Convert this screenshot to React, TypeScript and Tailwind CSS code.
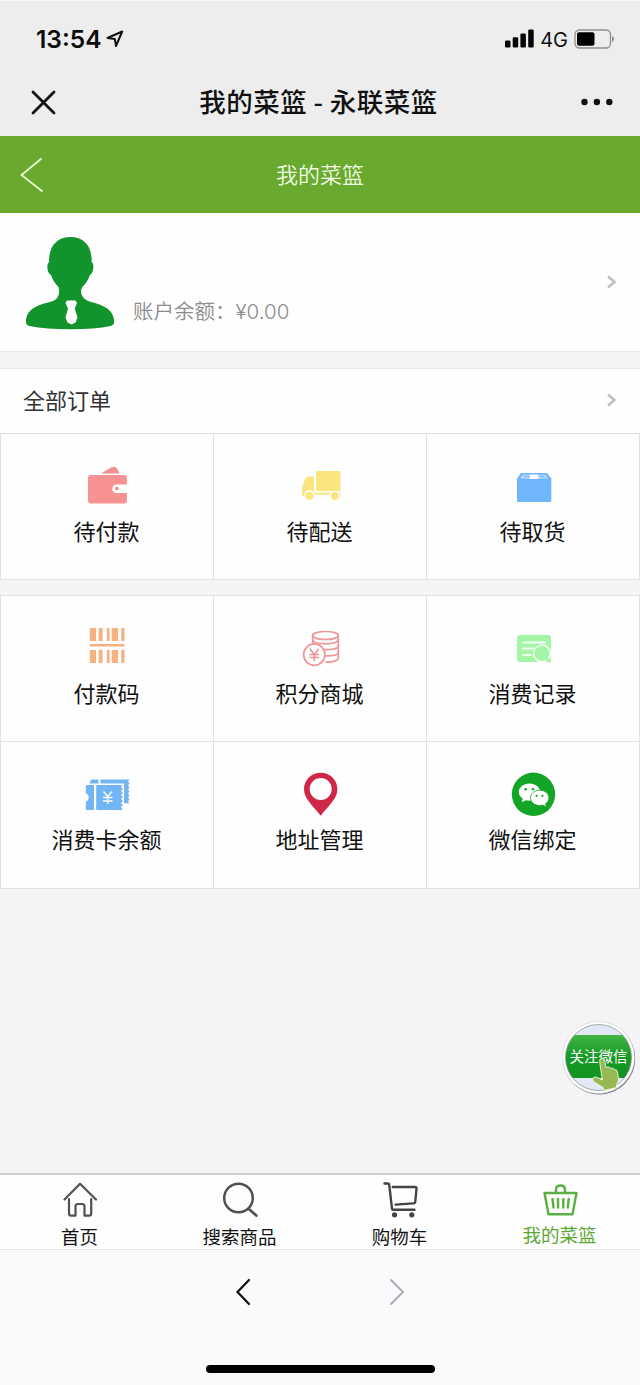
import React from 'react';

type IconProps = { children: React.ReactNode };

const MenuIcon: React.FC<IconProps> = ({ children }) => (
  <svg viewBox="0 0 48 48" className="w-12 h-12 -ml-px" fill="none">
    {children}
  </svg>
);

const WalletIcon = () => (
  <MenuIcon>
    <path d="M18 11.5 28.5 5.2q3.5-1.6 5.4 1.3L36.8 11.5Z" fill="#f58e8e" />
    <path
      d="M8 13H41q3 0 3 3V22.5H33.5a4.2 4.2 0 0 0 0 8.5H44V38.5q0 3-3 3H8q-3 0-3-3V16q0-3 3-3Z"
      fill="#f79292"
    />
    <circle cx="33.8" cy="26.6" r="1.8" fill="#f08a8a" />
  </MenuIcon>
);

const TruckIcon = () => (
  <MenuIcon>
    <g fill="#fbe57c">
      <path d="M20.5 9H43.5a1 1 0 0 1 1 1V29H20V10Z" />
      <path d="M18 14.5H13q-2.5 0-3.6 2.2L6.7 23.5q-.7 1.5-.7 3.2V33.5H8.4a4.8 4.8 0 0 1 9.6-1.5Z" />
      <path d="M19 30.5H34.5q-1 1-1.2 2.2H18.7q0-1.200.3-2.2ZM43 30.5H44.500V33H43.8q-.2-1.5-.8-2.500Z" />
      <circle cx="13.3" cy="34" r="4" />
      <circle cx="38.8" cy="34" r="4" />
    </g>
  </MenuIcon>
);

const BoxIcon = () => (
  <MenuIcon>
    <path d="M12 11H38l4.300 5.500V38.5q0 1.500-1.500 1.500H9.500Q8 40 8 38.5V16.500Z" fill="#70b6fb" />
    <path d="M14 12.800H36.500L39 16.500H11Z" fill="#b5d9ff" />
    <path d="M21.500 12.500H28.500L30 17H20.500Z" fill="#fff" />
    <path d="M15 14.500H20M30.500 14.500H35.500" stroke="#70b6fb" strokeWidth="1.2" />
  </MenuIcon>
);

const BarcodeIcon = () => (
  <MenuIcon>
    <path
      d="M6.8 4H13V17H6.8ZM15.7 4H19.6V17H15.7ZM23.8 4H26.6V17H23.8ZM28.7 4H35V17H28.7ZM38.2 4H41.5V17H38.2ZM6.8 26H13V39H6.8ZM15.7 26H19.6V39H15.7ZM23.8 26H26.6V39H23.8ZM28.7 26H35V39H28.7ZM38.2 26H41.5V39H38.2ZM6.8 20H41.5V22.5H6.8Z"
      fill="#f6b183"
    />
  </MenuIcon>
);

const CoinsIcon = () => (
  <MenuIcon>
    <g stroke="#ee9797" strokeWidth="1.7" strokeLinecap="round">
      <ellipse cx="29.5" cy="11.5" rx="12.8" ry="4" />
      <path d="M16.7 11.5V19M42.3 11.5V34c0 2.5-5 4.2-12.3 4.2" />
      <path d="M16.7 16c1 2.2 6 3.8 12.8 3.8s12.8-1.6 12.8-4M28.500 25.7c8 0 13.8-1.5 13.800-4M30.500 31.9c7 0 11.8-1.5 11.800-4" />
      <circle cx="18.3" cy="30.6" r="10.7" />
      <path d="M14.300 25.5 18.300 30.5 22.300 25.5M18.300 30.5V36.5M14 30.5H22.500M14 33.5H22.500" />
    </g>
  </MenuIcon>
);

const RecordIcon = () => (
  <MenuIcon>
    <rect x="8" y="11" width="34" height="27" rx="3" fill="#a5f5a6" />
    <path d="M14 18.5H36.500M14 24.500H24M14 31H22" stroke="#effff0" strokeWidth="2" strokeLinecap="round" />
    <circle cx="33" cy="29.5" r="8.4" fill="#a5f5a6" stroke="#effff0" strokeWidth="1.6" />
    <path d="M37 34 41 38" stroke="#a5f5a6" strokeWidth="3" />
  </MenuIcon>
);

const TicketIcon = () => (
  <MenuIcon>
    <g fill="#72b5f4">
      <path d="M7.5 10.5Q8 9.500 9.500 9.500H15.500V13.500H6.500ZM17.500 9.500H46.500l-1.500 2 1.500 2-1.500 2 1.500 2-1.500 2 1.500 2-1.500 2 1.500 2-1.500 2 1.500 2-1.500 2 1.500 1.700H41V13.500H17.500Z" />
      <path d="M4 15H11V40H2.800V31.500q2.800-.5 2.800-4t-2.800-4V16.500Q2.800 15 4 15Z" />
      <path d="M13.200 15H39.500l-1.500 2 2 2-2 2 2 2-2 2 2 2-2 2 2 2-2 2 2 2-2 2 1.500 3H13.200Z" />
    </g>
    <path d="M20.500 21.500 24.800 26.500 29 21.500M24.800 26.500V34M20 27.500H29.500M20 31H29.500" stroke="#fff" strokeWidth="1.3" />
  </MenuIcon>
);

const PinIcon = () => (
  <MenuIcon>
    <path
      fillRule="evenodd"
      d="M24.700 2.800C15.300 2.800 8 10 8 19.200 8 29 17 35.500 24.700 45.700 32.400 35.500 41.400 29 41.400 19.200 41.400 10 34.100 2.800 24.700 2.800ZM24.700 8a11 11 0 1 1 0 22 11 11 0 0 1 0-22Z"
      fill="#cf2748"
    />
  </MenuIcon>
);

const WechatIcon = () => (
  <MenuIcon>
    <circle cx="24.500" cy="24.300" r="21.700" fill="#12a526" />
    <path d="M20.500 13.500c-6 0-10.700 3.800-10.700 8.600 0 2.800 1.500 5.100 4 6.700L12.700 32.200 17 30.200c1.200.3 2.300.5 3.500.5 6 0 10.700-3.800 10.700-8.600s-4.700-8.600-10.700-8.600Z" fill="#fff" />
    <path d="M30.700 20.200c-5.200 0-9.200 3.300-9.200 7.600s4 7.700 9.200 7.700c1 0 2-.2 3-.4L37.300 37 36.500 33.800c2.100-1.400 3.400-3.500 3.400-6 0-4.300-4-7.600-9.200-7.600Z" fill="#fff" stroke="#12a526" strokeWidth="0.8" />
    <circle cx="16.700" cy="19.300" r="1.300" fill="#12a526" />
    <circle cx="24" cy="19.300" r="1.300" fill="#12a526" />
    <circle cx="27.600" cy="25.800" r="1.100" fill="#12a526" />
    <circle cx="33.500" cy="25.800" r="1.100" fill="#12a526" />
  </MenuIcon>
);

const TabIcon: React.FC<IconProps> = ({ children }) => (
  <svg viewBox="0 0 40 40" className="w-10 h-10" fill="none" strokeLinecap="round" strokeLinejoin="round">
    {children}
  </svg>
);

const HomeIcon = () => (
  <TabIcon>
    <g stroke="#505052" strokeWidth="2.2">
      <path d="M4.500 18.500 20 2.800 36 18.500" />
      <path d="M9 18V32.500q0 2.200 2.200 2.200H15.500V25.500q0-2.500 2.500-2.500H22q2.500 0 2.500 2.500V34.700H29q2.200 0 2.200-2.200V18" />
    </g>
  </TabIcon>
);

const SearchIcon = () => (
  <TabIcon>
    <circle cx="18.500" cy="17" r="14.300" stroke="#505052" strokeWidth="2.500" />
    <path d="M28.800 28 36.300 34.500" stroke="#505052" strokeWidth="2.800" />
  </TabIcon>
);

const CartIcon = () => (
  <TabIcon>
    <g stroke="#434347" strokeWidth="2.400">
      <path d="M4.500 2.500H8Q9 2.500 9.200 3.700L12 27.700q.2 1 1.300 1H34.500" />
      <path d="M12.800 6H35q1.600 0 1.500 1.600L35.300 20.500q-.2 1.800-1.800 1.900L15.500 23.600" />
    </g>
    <circle cx="14.500" cy="33.800" r="2.600" fill="#434347" />
    <circle cx="31.800" cy="33.800" r="2.600" fill="#434347" />
  </TabIcon>
);

const BasketIcon = () => (
  <TabIcon>
    <g stroke="#5bb043" strokeWidth="2.400">
      <path d="M4.500 12H36.500L32.500 33.300H8.500Z" />
      <path d="M16 11.500V8.500q0-4 4.500-4T25 8.500V11.500M12.500 18 13.500 26.500M18 18V26.500M23.300 18V26.500M28.700 18 27.800 26.500" />
    </g>
  </TabIcon>
);

const ArrowRight = () => (
  <svg viewBox="0 0 12 16" className="w-3 h-4" fill="none">
    <path d="M2 2.500 8.500 8 2 13.500" stroke="#bfbfc1" strokeWidth="2.500" />
  </svg>
);

const Avatar = () => (
  <svg viewBox="0 0 88 93" className="w-[88px] h-[93px] mt-0.5" fill="#12942c">
    <path d="M44.500 0C31 0 22.800 9 23 25q-2.200 1.500-1.500 6.500.6 5 3.500 6.500 2 6.500 7.500 12 1.500 6-.5 9.500-1.500 3.500-8 5.500C9.500 68.500 1.500 72.500 0 82.500V85q0 3 3.500 4Q20 92.300 44.500 92.300T84.500 89q3.500-1 3.500-4V82.500C86.500 72.500 78.500 68.500 65 65q-6-2-8.500-5.500-2.500-4-.5-9 5.500-5.500 8-12.500 2.500-1.500 3.300-6.500.7-5-1.600-6.500C66 9 58 0 44.500 0Z" />
    <path d="M41 63.500H49.500L51 66 48.800 71.500 51.500 80.500 49.500 85.500 45.500 87.500 41.500 85.500 39.500 80.500 42 71.500 39.500 66Z" fill="#fff" />
  </svg>
);

const orderItems = [
  { label: '待付款', Icon: WalletIcon },
  { label: '待配送', Icon: TruckIcon },
  { label: '待取货', Icon: BoxIcon },
];

const serviceItems = [
  { label: '付款码', Icon: BarcodeIcon },
  { label: '积分商城', Icon: CoinsIcon },
  { label: '消费记录', Icon: RecordIcon },
  { label: '消费卡余额', Icon: TicketIcon },
  { label: '地址管理', Icon: PinIcon },
  { label: '微信绑定', Icon: WechatIcon },
];

const tabs = [
  { label: '首页', Icon: HomeIcon, active: false },
  { label: '搜索商品', Icon: SearchIcon, active: false },
  { label: '购物车', Icon: CartIcon, active: false },
  { label: '我的菜篮', Icon: BasketIcon, active: true },
];

const MenuGrid: React.FC<{ items: typeof orderItems }> = ({ items }) => (
  <div className="grid grid-cols-3 gap-px p-px bg-[#e2e2e4]">
    {items.map(({ label, Icon }) => (
      <div key={label} className="h-[145px] nth-[n+4]:h-[146px] pt-7 bg-[#fefefe] flex flex-col items-center">
        <Icon />
        <span className="mt-[5px] -ml-px text-[22px] leading-[30px] text-[#111]">{label}</span>
      </div>
    ))}
  </div>
);

const App: React.FC = () => {
  return (
    <div className="w-[640px] h-[1385px] flex flex-col overflow-hidden bg-[#f4f3f5] font-['Noto_Sans_CJK_SC',sans-serif]">
      {/* Status bar */}
      <div className="h-[72px] shrink-0 pl-9 pr-[26px] pt-1 border-t border-[#f8f8f8] bg-[#ededed] flex items-center justify-between">
        <div className="flex items-center gap-1">
          <span className="pt-0.5 font-['Inter',sans-serif] text-[24.5px] leading-none font-semibold text-[#0c0c0c]">13:54</span>
          <svg viewBox="0 0 18 18" className="w-[18px] h-[18px]" fill="none">
            <path d="M1.5 8 16.2 1.5 10 16 8.8 9Z" stroke="#111" strokeWidth="2" strokeLinejoin="round" />
          </svg>
        </div>
        <div className="flex items-center">
          <svg viewBox="0 0 29 19" className="w-[29px] h-[19px]" fill="#050505">
            <rect x="0" y="11.5" width="5.5" height="7" rx="1.3" />
            <rect x="7.7" y="8.3" width="5.5" height="10.2" rx="1.3" />
            <rect x="15.4" y="4.5" width="5.5" height="14" rx="1.3" />
            <rect x="23.2" y="0.5" width="5.5" height="18" rx="1.3" />
          </svg>
          <span className="pt-0.5 ml-1.5 font-['Inter',sans-serif] text-[20px] leading-none text-[#111]">4G</span>
          <svg viewBox="0 0 40 20" className="ml-1.5 w-10 h-5" fill="none">
            <rect x="1" y="1" width="35.5" height="18" rx="4.5" stroke="#8e8e8e" strokeWidth="1.3" />
            <rect x="3" y="3.3" width="17.5" height="13.4" rx="2" fill="#000" />
            <path d="M38 7q2 .8 2 3t-2 3Z" fill="#8e8e8e" />
          </svg>
        </div>
      </div>

      {/* WeChat title bar */}
      <div className="h-16 shrink-0 pl-[30px] pr-[27px] bg-[#ededed] flex items-center justify-between">
        <svg viewBox="0 0 26 26" className="w-[26px] h-[26px] -mt-1" fill="none">
          <path d="M3 3 24 24M24 3 3 24" stroke="#111" strokeWidth="2.8" strokeLinecap="round" />
        </svg>
        <h1 className="-mt-1.5 text-[26.5px] leading-none tracking-[0.45px] font-medium text-[#111]">我的菜篮 - 永联菜篮</h1>
        <svg viewBox="0 0 32 8" className="w-8 h-2 -mt-1" fill="#111">
          <circle cx="3.5" cy="4" r="3.2" />
          <circle cx="15.9" cy="4" r="3.2" />
          <circle cx="28.3" cy="4" r="3.2" />
        </svg>
      </div>

      {/* Page header */}
      <div className="h-[77px] shrink-0 px-5 bg-[#69a92e] flex items-center">
        <svg viewBox="0 0 24 36" className="w-6 h-9" fill="none">
          <path d="M21.5 1.5 1.5 18 22.5 34.5" stroke="#e6fbd2" strokeWidth="1.8" />
        </svg>
        <h2 className="flex-1 -mt-0.5 pr-6 text-center text-[22px] font-[350] text-[#effbe4]">我的菜篮</h2>
      </div>

      {/* Profile */}
      <div className="h-[139px] shrink-0 pl-[26px] pr-[22px] bg-[#fefefe] border-b border-[#e6e6e8] flex items-center">
        <Avatar />
        <p className="mt-[58px] ml-[19px] flex-1 text-[20.5px] leading-[30px] font-[350] text-[#8b8b8d]">
          账户余额：<span className="font-['Inter',sans-serif] font-light">¥0.00</span>
        </p>
        <ArrowRight />
      </div>

      {/* All orders */}
      <div className="h-[66px] mt-4 shrink-0 pl-[23px] pr-[22px] pb-1 bg-[#fefefe] border-t border-[#e6e6e8] flex items-center justify-between">
        <span className="text-[22px] text-[#333]">全部订单</span>
        <ArrowRight />
      </div>
      <div className="-mt-px">
        <MenuGrid items={orderItems} />
      </div>
      <div className="mt-[15px]">
        <MenuGrid items={serviceItems} />
      </div>

      {/* Follow button floats over the page */}
      <div className="relative flex-1">
        <svg viewBox="0 0 76 76" className="absolute right-[3px] bottom-[77px] w-[76px] h-[76px]">
          <defs>
            <clipPath id="follow">
              <circle cx="37.5" cy="37.5" r="33" />
            </clipPath>
            <linearGradient id="leaf" x1="0" y1="0" x2="0" y2="1">
              <stop offset="0" stopColor="#42b543" />
              <stop offset="0.5" stopColor="#159a25" />
              <stop offset="1" stopColor="#149321" />
            </linearGradient>
          </defs>
          <circle cx="38.2" cy="38.5" r="36" fill="#66666a" />
          <circle cx="37.5" cy="37.5" r="36" fill="#fff" stroke="#d4d4da" strokeWidth="0.7" />
          <g clipPath="url(#follow)">
            <rect width="76" height="76" fill="#e2e8f6" />
            <rect y="15" width="76" height="43" fill="url(#leaf)" />
          </g>
          <circle cx="37.5" cy="37.5" r="33" fill="none" stroke="#8a978d" strokeWidth="0.8" />
          <text x="37.5" y="41.5" textAnchor="middle" fill="#fff" fontSize="14.5">关注微信</text>
          <path
            d="M38.800 42.500Q38 38.500 40.800 38.300 43.200 38.200 43.900 41.500L45 47.500Q48 46 49.500 48.300 52 47 53.300 49.800 56 49 56.500 52L57.500 59Q57.800 62 55.500 65V67.500L43.500 70.500 42 67.500 32.500 61.500Q30.500 59 32.500 57.500 35 56.300 37.500 58L41.300 60Z"
            fill="#97b854"
            stroke="#f2f8e6"
            strokeWidth="0.9"
          />
        </svg>
      </div>

      {/* Tab bar */}
      <div className="h-[77px] shrink-0 pt-1.5 border-t-2 border-b border-t-[#cfcdd0] border-b-[#e4e4e6] bg-[#fefefe] grid grid-cols-4">
        {tabs.map(({ label, Icon, active }) => (
          <div key={label} className="flex flex-col items-center">
            <Icon />
            <span
              className={`-ml-px text-[18.5px] leading-7 ${
                active ? '-mt-px text-[#5aa832]' : 'mt-px text-[#111]'
              }`}
            >
              {label}
            </span>
          </div>
        ))}
      </div>

      {/* Browser controls */}
      <div className="h-[135px] shrink-0 bg-[#faf9fc] flex flex-col items-center">
        <div className="mt-7 flex gap-[138px]">
          <svg viewBox="0 0 16 28" className="w-4 h-7" fill="none">
            <path d="M14 2 2.5 14 14 26" stroke="#111" strokeWidth="2.2" strokeLinecap="round" />
          </svg>
          <svg viewBox="0 0 16 28" className="w-4 h-7" fill="none">
            <path d="M2 2 14 14 2 26" stroke="#aaaaac" strokeWidth="1.8" strokeLinecap="round" />
          </svg>
        </div>
        <div className="mt-[59px] w-[229px] h-2 rounded-full bg-black" />
      </div>
    </div>
  );
};

export default App;
